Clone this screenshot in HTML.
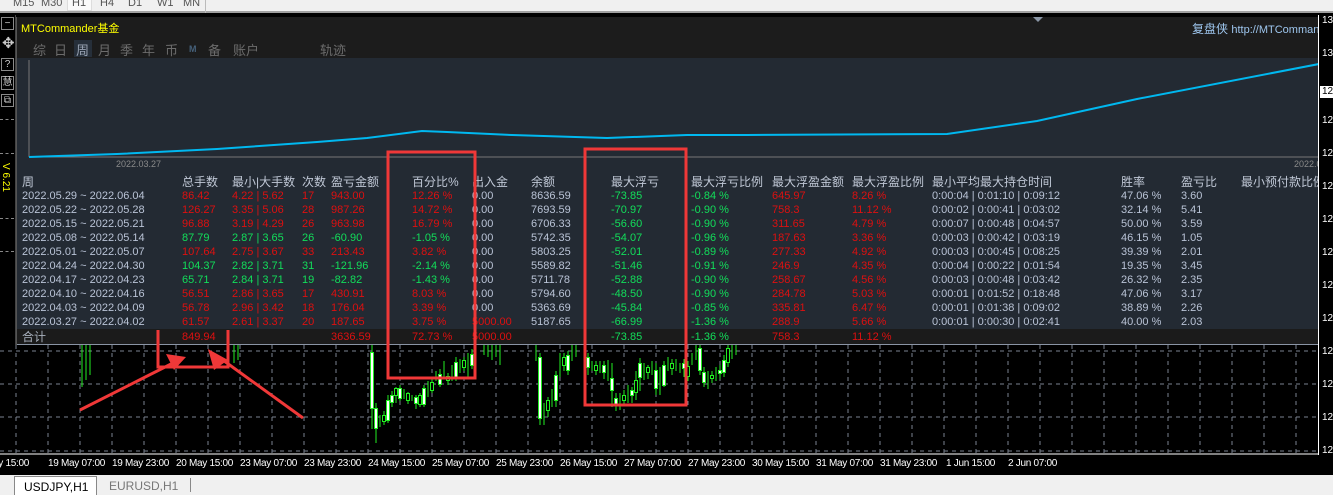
<!DOCTYPE html>
<html><head><meta charset="utf-8">
<style>
*{margin:0;padding:0;box-sizing:border-box}
body{width:1333px;height:495px;overflow:hidden;background:#000;font-family:"Liberation Sans","Noto Sans CJK SC",sans-serif;position:relative}
.a{position:absolute;white-space:nowrap}
#tb{left:0;top:0;width:1333px;height:13px;background:#f0f0f0;border-bottom:2px solid #a0a0a0}
#tb span{position:absolute;top:-3px;font-size:11px;color:#555}
#panel{left:16px;top:17px;width:1302px;height:328px;background:#232a33;overflow:hidden;border-left:1px solid #555}
#hdr{left:0;top:0;width:1302px;height:41px;background:#1c1c1c}
.tab{position:absolute;top:23px;font-size:13px;color:#6c6c6c}
.r{position:absolute;left:0;width:1302px;height:14px;font-size:11px;color:#b9c3d6;line-height:14px}
.r span{position:absolute;top:0}
.h{font-size:12px;color:#c0c8d6}
.R{color:#dd1010}.G{color:#12dd5a}
.c0{left:5px}.c1{left:165px}.c2{left:215px}.c3{left:285px}.c4{left:314px}.c5{left:395px}.c6{left:455px}.c7{left:514px}.c8{left:594px}.c9{left:674px}.c10{left:755px}.c11{left:835px}.c12{left:915px}.c13{left:1104px}.c14{left:1164px}.c15{left:1224px}
.pl{position:absolute;left:1322px;font-size:10px;color:#fff}
.tl{position:absolute;top:458px;font-size:10px;color:#fff;letter-spacing:-0.3px}
.lb{position:absolute;left:1px;width:13px;border:1px solid #8a8a8a;color:#ccc;font-size:10px;text-align:center;line-height:12px}
</style></head><body>
<div id="tb" class="a">
<span style="left:13px">M15</span><span style="left:41px">M30</span>
<span style="left:67px;width:25px;height:12px;background:#fafafa;border:1px solid #ddd;top:-1px"></span>
<span style="left:72px">H1</span><span style="left:100px">H4</span><span style="left:128px">D1</span><span style="left:157px">W1</span><span style="left:183px">MN</span>
<span style="left:205px;top:0;width:1px;height:13px;background:#bbb"></span>
</div>

<svg class="a" style="left:0;top:15px" width="1318" height="460">
<g stroke="#7a8290" stroke-width="1" stroke-dasharray="4,4">
<line x1="0" y1="336" x2="1318" y2="336"/><line x1="0" y1="369" x2="1318" y2="369"/><line x1="0" y1="402" x2="1318" y2="402"/><line x1="0" y1="436" x2="1318" y2="436"/>
<line x1="16" y1="330" x2="16" y2="440"/><line x1="48" y1="330" x2="48" y2="440"/><line x1="80" y1="330" x2="80" y2="440"/><line x1="112" y1="330" x2="112" y2="440"/><line x1="144" y1="330" x2="144" y2="440"/><line x1="176" y1="330" x2="176" y2="440"/><line x1="208" y1="330" x2="208" y2="440"/><line x1="240" y1="330" x2="240" y2="440"/><line x1="272" y1="330" x2="272" y2="440"/><line x1="304" y1="330" x2="304" y2="440"/><line x1="336" y1="330" x2="336" y2="440"/><line x1="368" y1="330" x2="368" y2="440"/><line x1="400" y1="330" x2="400" y2="440"/><line x1="432" y1="330" x2="432" y2="440"/><line x1="464" y1="330" x2="464" y2="440"/><line x1="496" y1="330" x2="496" y2="440"/><line x1="528" y1="330" x2="528" y2="440"/><line x1="560" y1="330" x2="560" y2="440"/><line x1="592" y1="330" x2="592" y2="440"/><line x1="624" y1="330" x2="624" y2="440"/><line x1="656" y1="330" x2="656" y2="440"/><line x1="688" y1="330" x2="688" y2="440"/><line x1="720" y1="330" x2="720" y2="440"/><line x1="752" y1="330" x2="752" y2="440"/><line x1="784" y1="330" x2="784" y2="440"/><line x1="816" y1="330" x2="816" y2="440"/><line x1="848" y1="330" x2="848" y2="440"/><line x1="880" y1="330" x2="880" y2="440"/><line x1="912" y1="330" x2="912" y2="440"/><line x1="944" y1="330" x2="944" y2="440"/><line x1="976" y1="330" x2="976" y2="440"/><line x1="1008" y1="330" x2="1008" y2="440"/><line x1="1040" y1="330" x2="1040" y2="440"/><line x1="1072" y1="330" x2="1072" y2="440"/><line x1="1104" y1="330" x2="1104" y2="440"/><line x1="1136" y1="330" x2="1136" y2="440"/><line x1="1168" y1="330" x2="1168" y2="440"/><line x1="1200" y1="330" x2="1200" y2="440"/><line x1="1232" y1="330" x2="1232" y2="440"/><line x1="1264" y1="330" x2="1264" y2="440"/><line x1="1296" y1="330" x2="1296" y2="440"/>
</g>
<line x1="0" y1="439" x2="1318" y2="439" stroke="#fff"/>
<g stroke="#22ee22" stroke-width="1" fill="none">
<path d="M82 330V372M86 330V365M90 330V360M234 330V348M238 330V345M372 328V414M376 388V428M380 400V412M384 396V410M388 380V408M392 376V392M396 372V388M400 370V386M404 374V384M408 377V389M412 380V386M416 380V394M420 378V392M424 370V392M428 366V382M432 364V378M436 356V366M440 354V372M444 346V362M448 358V370M452 350V366M456 342V366M460 344V358M464 342V356M468 338V362M472 334V354M476 330V360M484 330V340M488 330V342M492 330V345M496 330V342M500 330V350M536 330V346M540 338V410M544 388V410M548 382V402M552 374V392M556 356V392M560 338V362M564 338V356M568 336V360M572 330V346M576 330V342M588 338V360M592 346V356M596 346V360M600 346V358M604 346V364M608 345V366M612 348V392M616 378V396M620 378V395M624 375V390M628 370V388M632 372V388M636 356V385M640 343V376M644 348V365M648 350V364M652 346V360M656 348V380M660 352V380M664 346V372M668 342V356M672 344V360M676 344V356M680 348V358M684 344V362M688 346V366M692 338V350M696 330V345M700 330V360M704 352V372M708 356V374M712 356V368M716 352V366M720 350V364M724 340V362M728 330V352M732 330V344M736 330V340"/>
</g>
<g stroke="#22ee22" stroke-width="1">
<rect x="370.5" y="337.5" width="3" height="56" fill="#fff"/><rect x="374.5" y="393.5" width="3" height="20" fill="#fff"/><rect x="382.5" y="400.5" width="3" height="6" fill="#000"/><rect x="386.5" y="385.5" width="3" height="20" fill="#fff"/><rect x="390.5" y="380.5" width="3" height="7" fill="#fff"/><rect x="394.5" y="373.5" width="3" height="7" fill="#000"/><rect x="398.5" y="373.5" width="3" height="10" fill="#fff"/><rect x="406.5" y="378.5" width="3" height="7" fill="#000"/><rect x="414.5" y="382.5" width="3" height="6" fill="#fff"/><rect x="418.5" y="380.5" width="3" height="9" fill="#000"/><rect x="422.5" y="373.5" width="3" height="16" fill="#fff"/><rect x="430.5" y="367.5" width="3" height="8" fill="#000"/><rect x="438.5" y="359.5" width="3" height="10" fill="#fff"/><rect x="446.5" y="361.5" width="3" height="4" fill="#000"/><rect x="454.5" y="347.5" width="3" height="15" fill="#fff"/><rect x="462.5" y="345.5" width="3" height="7" fill="#000"/><rect x="470.5" y="339.5" width="3" height="11" fill="#fff"/><rect x="538.5" y="342.5" width="3" height="61" fill="#fff"/><rect x="546.5" y="385.5" width="3" height="10" fill="#000"/><rect x="554.5" y="360.5" width="3" height="25" fill="#fff"/><rect x="562.5" y="342.5" width="3" height="8" fill="#000"/><rect x="566.5" y="340.5" width="3" height="15" fill="#fff"/><rect x="586.5" y="342.5" width="3" height="10" fill="#fff"/><rect x="594.5" y="350.5" width="3" height="5" fill="#000"/><rect x="602.5" y="350.5" width="3" height="7" fill="#fff"/><rect x="610.5" y="363.5" width="3" height="12" fill="#fff"/><rect x="614.5" y="383.5" width="3" height="7" fill="#fff"/><rect x="622.5" y="380.5" width="3" height="5" fill="#000"/><rect x="630.5" y="375.5" width="3" height="5" fill="#fff"/><rect x="634.5" y="365.5" width="3" height="12" fill="#000"/><rect x="638.5" y="348.5" width="3" height="14" fill="#fff"/><rect x="646.5" y="352.5" width="3" height="5" fill="#000"/><rect x="654.5" y="355.5" width="3" height="18" fill="#fff"/><rect x="662.5" y="350.5" width="3" height="20" fill="#fff"/><rect x="670.5" y="348.5" width="3" height="5" fill="#000"/><rect x="682.5" y="348.5" width="3" height="5" fill="#fff"/><rect x="686.5" y="351.5" width="3" height="10" fill="#000"/><rect x="698.5" y="333.5" width="3" height="22" fill="#fff"/><rect x="702.5" y="357.5" width="3" height="10" fill="#fff"/><rect x="710.5" y="360.5" width="3" height="3" fill="#000"/><rect x="718.5" y="355.5" width="3" height="3" fill="#fff"/><rect x="722.5" y="345.5" width="3" height="12" fill="#fff"/><rect x="726.5" y="333.5" width="3" height="14" fill="#000"/>
</g>
</svg>

<div class="lb" style="top:17px;height:13px">−</div>
<div class="a" style="left:2px;top:34px;font-size:15px;color:#ccc">✥</div>
<div class="lb" style="top:58px;height:13px">?</div>
<div class="lb" style="top:76px;height:14px;font-size:10px">慧</div>
<div class="lb" style="top:94px;height:13px">⧉</div>
<div class="a" style="left:0;top:119px;width:14px;border-top:1px dashed #888"></div>
<div class="a" style="left:0;top:153px;width:14px;border-top:1px dashed #888"></div>
<div class="a" style="left:0;top:218px;width:14px;border-top:1px dashed #888"></div>
<div class="a" style="left:0;top:251px;width:14px;border-top:1px dashed #888"></div>
<div class="a" style="left:-9px;top:172px;font-size:10px;color:#ffff00;transform:rotate(90deg)">V 6.21</div>
<div class="a" style="left:15px;top:15px;width:1px;height:330px;background:#444"></div>

<div id="panel" class="a">
<div id="hdr" class="a">
<div class="a" style="left:4px;top:3px;font-size:11px;color:#ffff00">MTCommander基金</div>
<div class="a" style="left:1175px;top:3px;font-size:12px;color:#9ec6ee">复盘侠 <span style="font-size:11px">http://MTCommander</span></div>
<div class="a" style="left:1016px;top:0;width:0;height:0;border-left:5px solid transparent;border-right:5px solid transparent;border-top:5px solid #8a96a6"></div>
<div class="a" style="left:57px;top:23px;width:18px;height:17px;background:#262f3a"></div>
<span class="tab" style="left:16px">综</span><span class="tab" style="left:37px">日</span><span class="tab" style="left:59px;color:#9aa4b4">周</span><span class="tab" style="left:81px">月</span><span class="tab" style="left:103px">季</span><span class="tab" style="left:125px">年</span><span class="tab" style="left:148px">币</span><span class="tab" style="left:172px;font-size:9px;top:27px;color:#45607a;font-weight:bold">M</span><span class="tab" style="left:191px">备</span><span class="tab" style="left:216px">账户</span><span class="tab" style="left:303px">轨迹</span>
</div>
<svg class="a" style="left:0;top:41px" width="1302" height="130">
<line x1="12" y1="2" x2="12" y2="99" stroke="#777"/>
<line x1="12" y1="99" x2="1302" y2="99" stroke="#777"/>
<polyline fill="none" stroke="#00b8f0" stroke-width="2" points="12,99 100,96 200,91 300,84 350,80 405,73 430,74 495,77 590,80 670,77 730,77 930,76 1020,63 1120,41 1302,6"/>
<text x="99" y="109" font-size="9" fill="#8a8a8a" font-family="Liberation Sans">2022.03.27</text>
<text x="1277" y="109" font-size="9" fill="#8a8a8a" font-family="Liberation Sans">2022.0</text>
</svg>

<div class="r" style="top:158px"><span class="c0 h">周</span><span class="c1 h">总手数</span><span class="c2 h">最小|大手数</span><span class="c3 h">次数</span><span class="c4 h">盈亏金额</span><span class="c5 h">百分比%</span><span class="c6 h">出入金</span><span class="c7 h">余额</span><span class="c8 h">最大浮亏</span><span class="c9 h">最大浮亏比例</span><span class="c10 h">最大浮盈金额</span><span class="c11 h">最大浮盈比例</span><span class="c12 h">最小平均最大持仓时间</span><span class="c13 h">胜率</span><span class="c14 h">盈亏比</span><span class="c15 h">最小预付款比例</span></div>

<div class="r" style="top:172px"><span class="c0">2022.05.29 ~ 2022.06.04</span><span class="c1 R">86.42</span><span class="c2 R">4.22 | 5.62</span><span class="c3 R">17</span><span class="c4 R">943.00</span><span class="c5 R">12.26 %</span><span class="c6">0.00</span><span class="c7">8636.59</span><span class="c8 G">-73.85</span><span class="c9 G">-0.84 %</span><span class="c10 R">645.97</span><span class="c11 R">8.26 %</span><span class="c12">0:00:04 | 0:01:10 | 0:09:12</span><span class="c13">47.06 %</span><span class="c14">3.60</span></div>
<div class="r" style="top:186px"><span class="c0">2022.05.22 ~ 2022.05.28</span><span class="c1 R">126.27</span><span class="c2 R">3.35 | 5.06</span><span class="c3 R">28</span><span class="c4 R">987.26</span><span class="c5 R">14.72 %</span><span class="c6">0.00</span><span class="c7">7693.59</span><span class="c8 G">-70.97</span><span class="c9 G">-0.90 %</span><span class="c10 R">758.3</span><span class="c11 R">11.12 %</span><span class="c12">0:00:02 | 0:00:41 | 0:03:02</span><span class="c13">32.14 %</span><span class="c14">5.41</span></div>
<div class="r" style="top:200px"><span class="c0">2022.05.15 ~ 2022.05.21</span><span class="c1 R">96.88</span><span class="c2 R">3.19 | 4.29</span><span class="c3 R">26</span><span class="c4 R">963.98</span><span class="c5 R">16.79 %</span><span class="c6">0.00</span><span class="c7">6706.33</span><span class="c8 G">-56.60</span><span class="c9 G">-0.90 %</span><span class="c10 R">311.65</span><span class="c11 R">4.79 %</span><span class="c12">0:00:07 | 0:00:48 | 0:04:57</span><span class="c13">50.00 %</span><span class="c14">3.59</span></div>
<div class="r" style="top:214px"><span class="c0">2022.05.08 ~ 2022.05.14</span><span class="c1 G">87.79</span><span class="c2 G">2.87 | 3.65</span><span class="c3 G">26</span><span class="c4 G">-60.90</span><span class="c5 G">-1.05 %</span><span class="c6">0.00</span><span class="c7">5742.35</span><span class="c8 G">-54.07</span><span class="c9 G">-0.96 %</span><span class="c10 R">187.63</span><span class="c11 R">3.36 %</span><span class="c12">0:00:03 | 0:00:42 | 0:03:19</span><span class="c13">46.15 %</span><span class="c14">1.05</span></div>
<div class="r" style="top:228px"><span class="c0">2022.05.01 ~ 2022.05.07</span><span class="c1 R">107.64</span><span class="c2 R">2.75 | 3.67</span><span class="c3 R">33</span><span class="c4 R">213.43</span><span class="c5 R">3.82 %</span><span class="c6">0.00</span><span class="c7">5803.25</span><span class="c8 G">-52.01</span><span class="c9 G">-0.89 %</span><span class="c10 R">277.33</span><span class="c11 R">4.92 %</span><span class="c12">0:00:03 | 0:00:45 | 0:08:25</span><span class="c13">39.39 %</span><span class="c14">2.01</span></div>
<div class="r" style="top:242px"><span class="c0">2022.04.24 ~ 2022.04.30</span><span class="c1 G">104.37</span><span class="c2 G">2.82 | 3.71</span><span class="c3 G">31</span><span class="c4 G">-121.96</span><span class="c5 G">-2.14 %</span><span class="c6">0.00</span><span class="c7">5589.82</span><span class="c8 G">-51.46</span><span class="c9 G">-0.91 %</span><span class="c10 R">246.9</span><span class="c11 R">4.35 %</span><span class="c12">0:00:04 | 0:00:22 | 0:01:54</span><span class="c13">19.35 %</span><span class="c14">3.45</span></div>
<div class="r" style="top:256px"><span class="c0">2022.04.17 ~ 2022.04.23</span><span class="c1 G">65.71</span><span class="c2 G">2.84 | 3.71</span><span class="c3 G">19</span><span class="c4 G">-82.82</span><span class="c5 G">-1.43 %</span><span class="c6">0.00</span><span class="c7">5711.78</span><span class="c8 G">-52.88</span><span class="c9 G">-0.90 %</span><span class="c10 R">258.67</span><span class="c11 R">4.56 %</span><span class="c12">0:00:03 | 0:00:48 | 0:03:42</span><span class="c13">26.32 %</span><span class="c14">2.35</span></div>
<div class="r" style="top:270px"><span class="c0">2022.04.10 ~ 2022.04.16</span><span class="c1 R">56.51</span><span class="c2 R">2.86 | 3.65</span><span class="c3 R">17</span><span class="c4 R">430.91</span><span class="c5 R">8.03 %</span><span class="c6">0.00</span><span class="c7">5794.60</span><span class="c8 G">-48.50</span><span class="c9 G">-0.90 %</span><span class="c10 R">284.78</span><span class="c11 R">5.03 %</span><span class="c12">0:00:01 | 0:01:52 | 0:18:48</span><span class="c13">47.06 %</span><span class="c14">3.17</span></div>
<div class="r" style="top:284px"><span class="c0">2022.04.03 ~ 2022.04.09</span><span class="c1 R">56.78</span><span class="c2 R">2.96 | 3.42</span><span class="c3 R">18</span><span class="c4 R">176.04</span><span class="c5 R">3.39 %</span><span class="c6">0.00</span><span class="c7">5363.69</span><span class="c8 G">-45.84</span><span class="c9 G">-0.85 %</span><span class="c10 R">335.81</span><span class="c11 R">6.47 %</span><span class="c12">0:00:01 | 0:01:38 | 0:09:02</span><span class="c13">38.89 %</span><span class="c14">2.26</span></div>
<div class="r" style="top:298px"><span class="c0">2022.03.27 ~ 2022.04.02</span><span class="c1 R">61.57</span><span class="c2 R">2.61 | 3.37</span><span class="c3 R">20</span><span class="c4 R">187.65</span><span class="c5 R">3.75 %</span><span class="c6 R">5000.00</span><span class="c7">5187.65</span><span class="c8 G">-66.99</span><span class="c9 G">-1.36 %</span><span class="c10 R">288.9</span><span class="c11 R">5.66 %</span><span class="c12">0:00:01 | 0:00:30 | 0:02:41</span><span class="c13">40.00 %</span><span class="c14">2.03</span></div>
<div class="a" style="left:0;top:312px;width:1302px;height:15px;background:#1b1b1b"></div>
<div class="r" style="top:313px"><span class="c0 h" style="color:#a8b0bc">合计</span><span class="c1 R">849.94</span><span class="c4 R">3636.59</span><span class="c5 R">72.73 %</span><span class="c6 R">5000.00</span><span class="c8 G">-73.85</span><span class="c9 G">-1.36 %</span><span class="c10 R">758.3</span><span class="c11 R">11.12 %</span></div>
<div class="a" style="left:0;top:327px;width:1302px;height:1px;background:#8a94a4"></div>
</div>

<div class="a" style="left:1318px;top:15px;width:1px;height:440px;background:#fff"></div>
<div class="pl" style="top:15px">13</div><div class="pl" style="top:48px">13</div>
<div class="a" style="left:1320px;top:86px;width:13px;height:12px;background:#fff;font-size:10px;color:#000;padding-left:2px">12</div>
<div class="pl" style="top:115px">12</div><div class="pl" style="top:148px">12</div><div class="pl" style="top:181px">12</div><div class="pl" style="top:214px">12</div><div class="pl" style="top:247px">12</div><div class="pl" style="top:280px">12</div><div class="pl" style="top:313px">12</div><div class="pl" style="top:346px">12</div><div class="pl" style="top:379px">12</div><div class="pl" style="top:412px">12</div><div class="pl" style="top:445px">12</div>

<div class="tl" style="left:-15px">May 15:00</div><div class="tl" style="left:48px">19 May 07:00</div><div class="tl" style="left:112px">19 May 23:00</div><div class="tl" style="left:176px">20 May 15:00</div><div class="tl" style="left:240px">23 May 07:00</div><div class="tl" style="left:304px">23 May 23:00</div><div class="tl" style="left:368px">24 May 15:00</div><div class="tl" style="left:432px">25 May 07:00</div><div class="tl" style="left:496px">25 May 23:00</div><div class="tl" style="left:560px">26 May 15:00</div><div class="tl" style="left:624px">27 May 07:00</div><div class="tl" style="left:688px">27 May 23:00</div><div class="tl" style="left:752px">30 May 15:00</div><div class="tl" style="left:816px">31 May 07:00</div><div class="tl" style="left:880px">31 May 23:00</div><div class="tl" style="left:946px">1 Jun 15:00</div><div class="tl" style="left:1008px">2 Jun 07:00</div>

<div class="a" style="left:0;top:475px;width:1333px;height:20px;background:#f0f0f0"></div>
<div class="a" style="left:14px;top:476px;width:83px;height:19px;background:#fff;border:1px solid #888;border-bottom:none;font-size:12px;color:#000;padding:3px 0 0 9px">USDJPY,H1</div>
<div class="a" style="left:109px;top:479px;font-size:12px;color:#777">EURUSD,H1</div>
<div class="a" style="left:190px;top:478px;width:1px;height:14px;background:#888"></div>

<svg class="a" style="left:0;top:0" width="1333" height="495">
<g fill="none" stroke="#f03838" stroke-width="3">
<rect x="388" y="152" width="87" height="226"/>
<rect x="585" y="149" width="101" height="256"/>
<polyline points="158,330 158,367 228,367 228,330"/>
<line x1="80" y1="410" x2="175" y2="362"/>
<line x1="303" y1="418" x2="220" y2="358"/>
</g>
<polygon points="186,357 166,354 174,370" fill="#f03838"/>
<polygon points="208,349 214,370 228,360" fill="#f03838"/>
</svg>
</body></html>
